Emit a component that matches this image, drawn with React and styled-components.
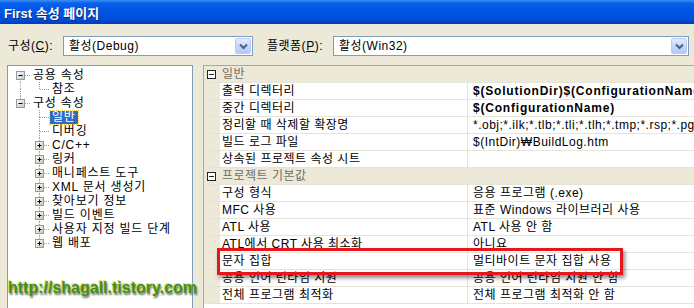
import React from "react";
import styled, { createGlobalStyle } from "styled-components";

const GlobalStyle = createGlobalStyle`
  html, body {
    margin: 0;
    padding: 0;
  }
  body {
    background: #ece9d8;
    font-family: "Liberation Sans", "Noto Sans CJK KR", sans-serif;
    font-size: 12px;
    color: #000;
  }
`;

const Window = styled.div`
  position: relative;
  width: 694px;
  height: 308px;
  overflow: hidden;
  background: #ece9d8;
  display: flex;
  flex-direction: column;
`;

const TitleBar = styled.div`
  flex: none;
  height: 24px;
  display: flex;
  align-items: center;
  padding-left: 4px;
  box-sizing: border-box;
  background: linear-gradient(
    to bottom,
    #3d8ff6 0px,
    #0b63ea 3px,
    #0058e8 8px,
    #0054e3 14px,
    #004cd6 20px,
    #003cb8 24px
  );
  color: #fff;
  font-weight: bold;
  font-size: 13px;
  text-shadow: 1px 1px 0 #0b2a80;
`;

const ConfigBar = styled.div`
  flex: none;
  display: flex;
  align-items: center;
  height: 20px;
  margin-top: 12px;
  padding-left: 8px;
  padding-right: 5px;
  letter-spacing: 0.5px;
`;

const FieldLabel = styled.span`
  flex: none;
  width: ${(p) => p.w}px;
  margin-left: ${(p) => p.gap || 0}px;
  line-height: 20px;
  white-space: nowrap;

  u {
    text-decoration: underline;
  }
`;

const Combo = styled.div`
  flex: ${(p) => (p.w ? "none" : "1")};
  width: ${(p) => (p.w ? `${p.w}px` : "auto")};
  height: 20px;
  box-sizing: border-box;
  border: 1px solid #7f9db9;
  background: #fff;
  display: flex;
  align-items: center;
`;

const ComboText = styled.span`
  flex: 1;
  padding-left: 5px;
  line-height: 18px;
  white-space: nowrap;
`;

const DropButton = styled.span`
  flex: none;
  width: 16px;
  height: 16px;
  margin-right: 1px;
  border: 1px solid #b9cbf5;
  border-radius: 2px;
  box-sizing: border-box;
  background: linear-gradient(to bottom, #e2ebfe, #c2d4fb 60%, #b4c9f8);
  display: flex;
  align-items: center;
  justify-content: center;
`;

const Body = styled.div`
  flex: none;
  height: 260px;
  margin-top: 9px;
  padding-left: 7px;
  display: flex;
`;

const TreePanel = styled.div`
  flex: none;
  width: 186px;
  box-sizing: border-box;
  border: 1px solid #7f9db9;
  background: #fff;
  padding: 2px 0 0 3px;
  display: flex;
  flex-direction: column;
  letter-spacing: 0.8px;
`;

const TreeRow = styled.div`
  height: 14px;
  display: flex;
  align-items: center;
`;

const TreeLabel = styled.span`
  margin-left: ${(p) => (p.selected ? 1 : 3)}px;
  padding: 0 ${(p) => (p.selected ? 2 : 0)}px;
  height: 13px;
  line-height: 13px;
  white-space: nowrap;
  color: ${(p) => (p.selected ? "#fff" : "#000")};
  background: ${(p) => (p.selected ? "#316ac5" : "transparent")};
  outline: ${(p) => (p.selected ? "1px dotted #e8c860" : "none")};
`;

const Grid = styled.div`
  flex: 1;
  min-width: 0;
  margin-left: 10px;
  border-top: 1px solid #a7a6aa;
  border-left: 1px solid #a7a6aa;
  background: #fff;
  display: flex;
  flex-direction: column;
  letter-spacing: 0.5px;
`;

const GridRow = styled.div`
  flex: none;
  height: 17px;
  box-sizing: border-box;
  border-bottom: 1px solid #e6e4d9;
  display: grid;
  grid-template-columns: 16px 248px minmax(0, 1fr);
  background: ${(p) => (p.category ? "#ece9d8" : "#fff")};
  white-space: nowrap;
  line-height: 16px;
`;

const Margin = styled.div`
  background: #ece9d8;
  display: flex;
  align-items: center;
  padding-left: 3px;
`;

const CategoryLabel = styled.div`
  grid-column: 2 / 4;
  padding-left: 2px;
  color: #6e6d68;
`;

const NameCell = styled.div`
  padding-left: 2px;
  border-right: 1px solid #e6e4d9;
  overflow: hidden;
`;

const ValueCell = styled.div`
  padding-left: 5px;
  overflow: hidden;
  text-overflow: clip;
  font-weight: ${(p) => (p.bold ? "bold" : "normal")};
  letter-spacing: ${(p) => (p.bold ? "0.8px" : "0.5px")};
`;

const Highlight = styled.div`
  position: absolute;
  left: 217px;
  top: 248px;
  width: 406px;
  height: 27px;
  box-sizing: border-box;
  border: 3px solid #e5161c;
  box-shadow: 2px 3px 4px rgba(0, 0, 0, 0.45);
  pointer-events: none;
`;

const Watermark = styled.div`
  position: absolute;
  left: 8px;
  top: 279px;
  font-family: "Liberation Sans", sans-serif;
  font-weight: bold;
  font-size: 16px;
  line-height: 18px;
  color: #3f8f1c;
  text-shadow: -1px -1px 0 rgba(222, 226, 70, 0.85), 1px 2px 2px rgba(0, 0, 0, 0.6);
`;

const Chevron = () => (
  <svg width="9" height="7" viewBox="0 0 9 7">
    <path d="M1 1.5 L4.5 5 L8 1.5" fill="none" stroke="#4d6185" strokeWidth="2" />
  </svg>
);

const CategoryBox = () => (
  <svg width="9" height="9" viewBox="0 0 9 9">
    <rect x="0.5" y="0.5" width="8" height="8" fill="#fff" stroke="#222" />
    <line x1="2" y1="4.5" x2="7" y2="4.5" stroke="#222" />
  </svg>
);

// one indent cell of the tree: dotted connector lines plus an optional +/- box
const Guide = ({ kind, expander }) => {
  const top = kind === "pass" || kind === "tee" || kind === "end";
  const bottom = kind === "pass" || kind === "tee" || kind === "start";
  const horiz = kind === "tee" || kind === "end" || kind === "start";
  const dot = { stroke: "#a0a0a0", strokeDasharray: "1 1", shapeRendering: "crispEdges" };
  return (
    <svg width="19" height="14" viewBox="0 0 19 14" style={{ flex: "none" }}>
      <defs>
        <linearGradient id="exp" x1="0" y1="0" x2="1" y2="1">
          <stop offset="0" stopColor="#ffffff" />
          <stop offset="1" stopColor="#c8c4b4" />
        </linearGradient>
      </defs>
      {top && <line x1="9.5" y1="0" x2="9.5" y2="7" {...dot} />}
      {bottom && <line x1="9.5" y1="7" x2="9.5" y2="14" {...dot} />}
      {horiz && <line x1="10" y1="7.5" x2="19" y2="7.5" {...dot} />}
      {expander && (
        <g>
          <rect x="5.5" y="3.5" width="8" height="8" fill="url(#exp)" stroke="#8c9caa" />
          <line x1="7.5" y1="7.5" x2="11.5" y2="7.5" stroke="#000" />
          {expander === "+" && <line x1="9.5" y1="5.5" x2="9.5" y2="9.5" stroke="#000" />}
        </g>
      )}
    </svg>
  );
};

const tree = [
  { label: "공용 속성", guides: ["start"], expander: "-" },
  { label: "참조", guides: ["pass", "end"] },
  { label: "구성 속성", guides: ["end"], expander: "-" },
  { label: "일반", guides: ["none", "tee"], selected: true },
  { label: "디버깅", guides: ["none", "tee"] },
  { label: "C/C++", guides: ["none", "tee"], expander: "+" },
  { label: "링커", guides: ["none", "tee"], expander: "+" },
  { label: "매니페스트 도구", guides: ["none", "tee"], expander: "+" },
  { label: "XML 문서 생성기", guides: ["none", "tee"], expander: "+" },
  { label: "찾아보기 정보", guides: ["none", "tee"], expander: "+" },
  { label: "빌드 이벤트", guides: ["none", "tee"], expander: "+" },
  { label: "사용자 지정 빌드 단계", guides: ["none", "tee"], expander: "+" },
  { label: "웹 배포", guides: ["none", "end"], expander: "+" },
];

const props = [
  { category: "일반" },
  { name: "출력 디렉터리", value: "$(SolutionDir)$(ConfigurationName)", bold: true },
  { name: "중간 디렉터리", value: "$(ConfigurationName)", bold: true },
  { name: "정리할 때 삭제할 확장명", value: "*.obj;*.ilk;*.tlb;*.tli;*.tlh;*.tmp;*.rsp;*.pgc;*.pgd" },
  { name: "빌드 로그 파일", value: "$(IntDir)₩BuildLog.htm" },
  { name: "상속된 프로젝트 속성 시트", value: "" },
  { category: "프로젝트 기본값" },
  { name: "구성 형식", value: "응용 프로그램 (.exe)" },
  { name: "MFC 사용", value: "표준 Windows 라이브러리 사용" },
  { name: "ATL 사용", value: "ATL 사용 안 함" },
  { name: "ATL에서 CRT 사용 최소화", value: "아니요" },
  { name: "문자 집합", value: "멀티바이트 문자 집합 사용" },
  { name: "공용 언어 런타임 지원", value: "공용 언어 런타임 지원 안 함" },
  { name: "전체 프로그램 최적화", value: "전체 프로그램 최적화 안 함" },
];

export default function App() {
  return (
    <>
      <GlobalStyle />
      <Window>
        <TitleBar>First 속성 페이지</TitleBar>

        <ConfigBar>
          <FieldLabel w={55}>
            구성(<u>C</u>):
          </FieldLabel>
          <Combo w={190}>
            <ComboText>활성(Debug)</ComboText>
            <DropButton>
              <Chevron />
            </DropButton>
          </Combo>
          <FieldLabel w={66} gap={14}>
            플랫폼(<u>P</u>):
          </FieldLabel>
          <Combo>
            <ComboText>활성(Win32)</ComboText>
            <DropButton>
              <Chevron />
            </DropButton>
          </Combo>
        </ConfigBar>

        <Body>
          <TreePanel>
            {tree.map((node) => (
              <TreeRow key={node.label}>
                {node.guides.map((g, i) => (
                  <Guide
                    key={i}
                    kind={g}
                    expander={i === node.guides.length - 1 ? node.expander : null}
                  />
                ))}
                <TreeLabel selected={node.selected}>{node.label}</TreeLabel>
              </TreeRow>
            ))}
          </TreePanel>

          <Grid>
            {props.map((p) =>
              p.category ? (
                <GridRow key={p.category} category>
                  <Margin>
                    <CategoryBox />
                  </Margin>
                  <CategoryLabel>{p.category}</CategoryLabel>
                </GridRow>
              ) : (
                <GridRow key={p.name}>
                  <Margin />
                  <NameCell>{p.name}</NameCell>
                  <ValueCell bold={p.bold}>{p.value}</ValueCell>
                </GridRow>
              )
            )}
          </Grid>
        </Body>

        <Highlight />
        <Watermark>http://shagall.tistory.com</Watermark>
      </Window>
    </>
  );
}
